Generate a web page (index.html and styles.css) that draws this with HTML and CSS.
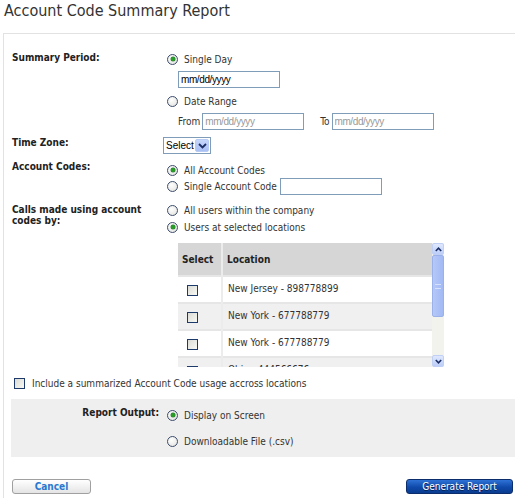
FILE: index.html
```html
<!DOCTYPE html>
<html lang="en">
<head>
    <meta charset="UTF-8">
    <title>Account Code Summary Report</title>
    <link rel="stylesheet" href="styles.css">
</head>
<body>
    <h1>Account Code Summary Report</h1>

    <div class="panel">
        <div class="row row-period">
            <div class="label">Summary Period:</div>
            <div class="controls">
                <label class="option"><input type="radio" name="period" checked> Single Day</label>
                <input type="text" class="date indent" value="mm/dd/yyyy">
                <label class="option opt-range"><input type="radio" name="period"> Date Range</label>
                <div class="range indent">
                    <span>From</span>
                    <input type="text" class="date" placeholder="mm/dd/yyyy">
                    <span class="to">To</span>
                    <input type="text" class="date" placeholder="mm/dd/yyyy">
                </div>
            </div>
        </div>

        <div class="row row-zone">
            <div class="label">Time Zone:</div>
            <div class="controls">
                <span class="select">
                    <span class="select-text">Select</span>
                    <span class="select-arrow">
                        <svg width="9" height="6" viewBox="0 0 9 6"><path d="M1 1 L4.5 4.5 L8 1" fill="none" stroke="#1b2f66" stroke-width="1.8"/></svg>
                    </span>
                </span>
            </div>
        </div>

        <div class="row row-codes">
            <div class="label">Account Codes:</div>
            <div class="controls">
                <label class="option"><input type="radio" name="codes" checked> All Account Codes</label>
                <label class="option opt-single"><input type="radio" name="codes"> Single Account Code <input type="text" class="code"></label>
            </div>
        </div>

        <div class="row row-calls">
            <div class="label label-wrap">Calls made using account codes by:</div>
            <div class="controls">
                <label class="option"><input type="radio" name="calls"> All users within the company</label>
                <label class="option opt-users"><input type="radio" name="calls" checked> Users at selected locations</label>
            </div>
        </div>

        <div class="list">
            <div class="list-body">
                <table>
                    <thead>
                        <tr><th class="col-select">Select</th><th>Location</th></tr>
                    </thead>
                    <tbody>
                        <tr><td class="col-select"><input type="checkbox"></td><td>New Jersey - 898778899</td></tr>
                        <tr class="alt"><td class="col-select"><input type="checkbox"></td><td>New York - 677788779</td></tr>
                        <tr><td class="col-select"><input type="checkbox"></td><td>New York - 677788779</td></tr>
                        <tr class="alt"><td class="col-select"><input type="checkbox"></td><td>Ohio - 444566676</td></tr>
                    </tbody>
                </table>
            </div>
            <div class="scrollbar">
                <div class="scroll-btn">
                    <svg width="7" height="5" viewBox="0 0 7 5"><path d="M0.8 4 L3.5 1.2 L6.2 4" fill="none" stroke="#1b2f66" stroke-width="1.6"/></svg>
                </div>
                <div class="scroll-thumb"><span class="grip"></span></div>
                <div class="scroll-track"></div>
                <div class="scroll-btn">
                    <svg width="7" height="5" viewBox="0 0 7 5"><path d="M0.8 1 L3.5 3.8 L6.2 1" fill="none" stroke="#1b2f66" stroke-width="1.6"/></svg>
                </div>
            </div>
        </div>

        <label class="include"><input type="checkbox"> Include a summarized Account Code usage accross locations</label>

        <div class="output">
            <div class="output-label">Report Output:</div>
            <div class="controls">
                <label class="option"><input type="radio" name="output" checked> Display on Screen</label>
                <label class="option opt-file"><input type="radio" name="output"> Downloadable File (.csv)</label>
            </div>
        </div>

        <div class="buttons">
            <button class="btn-cancel">Cancel</button>
            <button class="btn-generate">Generate Report</button>
        </div>
    </div>
</body>
</html>
```

FILE: styles.css
```css
body {
    margin: 0;
    font-family: "DejaVu Sans Condensed", "DejaVu Sans", sans-serif;
    font-size: 10px;
    color: #333;
    background: #fff;
    overflow: hidden;
}

h1 {
    margin: 0;
    padding: 1px 0 0 4px;
    height: 32px;
    font-size: 16px;
    font-weight: normal;
    color: #333;
    line-height: 20px;
}

.panel {
    margin-left: 3px;
    border-top: 1px solid #e2e2e2;
    border-left: 1px solid #e2e2e2;
    padding: 17px 0 0 7px;
    height: 448px;
}

.row {
    display: flex;
}

.label {
    width: 152px;
    padding-left: 1px;
    box-sizing: border-box;
    font-weight: bold;
    color: #222;
    line-height: 14px;
    flex-shrink: 0;
}

.controls {
    display: flex;
    flex-direction: column;
    align-items: flex-start;
}

.option {
    display: flex;
    align-items: center;
    height: 16px;
    color: #333;
}

input[type="radio"] {
    appearance: none;
    width: 11px;
    height: 11px;
    margin: 0 6px 0 4px;
    border: 1px solid #3c4d6e;
    border-radius: 50%;
    background: radial-gradient(circle at 40% 35%, #fff, #e0e0dc);
    box-sizing: border-box;
    position: relative;
}

input[type="radio"]:checked::after {
    content: "";
    position: absolute;
    left: 2.5px;
    top: 2.5px;
    width: 4px;
    height: 4px;
    border-radius: 50%;
    background: #25a025;
    box-shadow: 0 0 0 0.5px #3a7a3a;
}

input[type="checkbox"] {
    appearance: none;
    width: 11px;
    height: 11px;
    margin: 0;
    border: 1px solid #1e3a6a;
    background: linear-gradient(135deg, #dcdcd6, #f8f8f4);
    box-sizing: border-box;
}

.indent {
    margin-left: 15px;
}

input[type="text"] {
    height: 17px;
    box-sizing: border-box;
    border: 1px solid #7f9db9;
    padding: 0 2px;
    font-family: "Liberation Sans", sans-serif;
    font-size: 10px;
    letter-spacing: -0.4px;
    color: #000;
}

input[type="text"]::placeholder {
    color: #999;
}

.date {
    width: 102px;
    margin-top: 4px;
}

.opt-range {
    margin-top: 5px;
}

.range {
    display: flex;
    align-items: center;
    height: 18px;
    margin-top: 3px;
}

.range .date {
    margin: 0 0 0 2px;
}

.range .to {
    margin-left: 16px;
}

.row-zone {
    margin-top: 7px;
}

.row-zone .label {
    line-height: 12px;
}

.select {
    display: flex;
    align-items: stretch;
    width: 48px;
    height: 17px;
    border: 1px solid #7f9db9;
    box-sizing: border-box;
    font-family: "Liberation Sans", sans-serif;
    font-size: 10px;
    color: #000;
}

.select-text {
    flex: 1;
    padding-left: 2px;
    line-height: 15px;
}

.select-arrow {
    width: 14px;
    margin: 1px;
    display: flex;
    align-items: center;
    justify-content: center;
    background: linear-gradient(#c6d6fb, #a9c0f5);
    border: 1px solid #b8cbf4;
    border-radius: 2px;
    box-sizing: border-box;
}

.row-codes {
    margin-top: 8px;
}

.row-codes .label {
    margin-top: -2px;
}

.opt-single {
    height: 16px;
}

.code {
    width: 102px;
    margin-left: 3px;
}

.row-calls {
    margin-top: 8px;
}

.label-wrap {
    line-height: 11px;
    padding-right: 8px;
    margin-top: 2px;
}

.opt-users {
    margin-top: 1px;
}

.list {
    display: flex;
    margin: 8px 0 0 167px;
    height: 124px;
}

.list-body {
    width: 254px;
    height: 124px;
    overflow: hidden;
}

table {
    width: 100%;
    border-collapse: collapse;
}

th {
    height: 32px;
    padding: 0 0 0 4px;
    background: #d6d6d6;
    text-align: left;
    font-weight: bold;
    color: #222;
    border-left: 2px solid #ececec;
}

td {
    height: 22px;
    padding: 0 0 3px 5px;
    border-left: 2px solid #ececec;
    border-top: 2px solid #e6e6e6;
    color: #333;
}

th.col-select,
td.col-select {
    width: 34px;
    border-left: none;
}

td.col-select {
    padding: 3px 0 0 9px;
}

tr.alt td {
    background: #f0f0f0;
}

.scrollbar {
    width: 12px;
    height: 124px;
    display: flex;
    flex-direction: column;
    background: #f3f3ee;
}

.scroll-btn {
    height: 12px;
    display: flex;
    align-items: center;
    justify-content: center;
    background: linear-gradient(#dfe8fd, #bccdf8);
    border: 1px solid #c0d0f4;
    border-radius: 2px;
    box-sizing: border-box;
}

.scroll-thumb {
    height: 62px;
    background: linear-gradient(90deg, #b5c8f7, #a2b9f4);
    border: 1px solid #9bb1ea;
    border-radius: 2px;
    box-sizing: border-box;
    display: flex;
    align-items: center;
    justify-content: center;
}

.grip {
    width: 6px;
    height: 5px;
    border-top: 1px solid #d6e1fb;
    border-bottom: 1px solid #d6e1fb;
    box-sizing: border-box;
}

.scroll-track {
    flex: 1;
}

.include {
    display: flex;
    align-items: center;
    height: 16px;
    margin: 8px 0 0 3px;
    color: #333;
}

.include input {
    margin-right: 7px;
}

.output {
    display: flex;
    margin-top: 8px;
    height: 58px;
    padding-top: 8px;
    box-sizing: border-box;
    background: #efefef;
}

.output-label {
    width: 152px;
    padding-right: 4px;
    box-sizing: border-box;
    text-align: right;
    font-weight: bold;
    color: #222;
    line-height: 12px;
}

.opt-file {
    margin-top: 10px;
}

.buttons {
    display: flex;
    justify-content: space-between;
    margin: 22px 0 0 1px;
    width: 501px;
}

button {
    height: 15px;
    padding: 0;
    font-family: "DejaVu Sans Condensed", "DejaVu Sans", sans-serif;
    font-size: 10px;
    line-height: 13px;
    border-radius: 3px;
    cursor: pointer;
}

.btn-cancel {
    width: 79px;
    border: 1px solid #a0a0a0;
    background: linear-gradient(#ffffff, #e4e4e4);
    color: #2a78d0;
    font-weight: bold;
}

.btn-generate {
    width: 107px;
    border: 1px solid #0c2d6b;
    background: linear-gradient(#2e72d6, #0f4aaa 55%, #0a3c90);
    color: #fff;
    text-shadow: 0 1px 0 #06245a;
}
```
